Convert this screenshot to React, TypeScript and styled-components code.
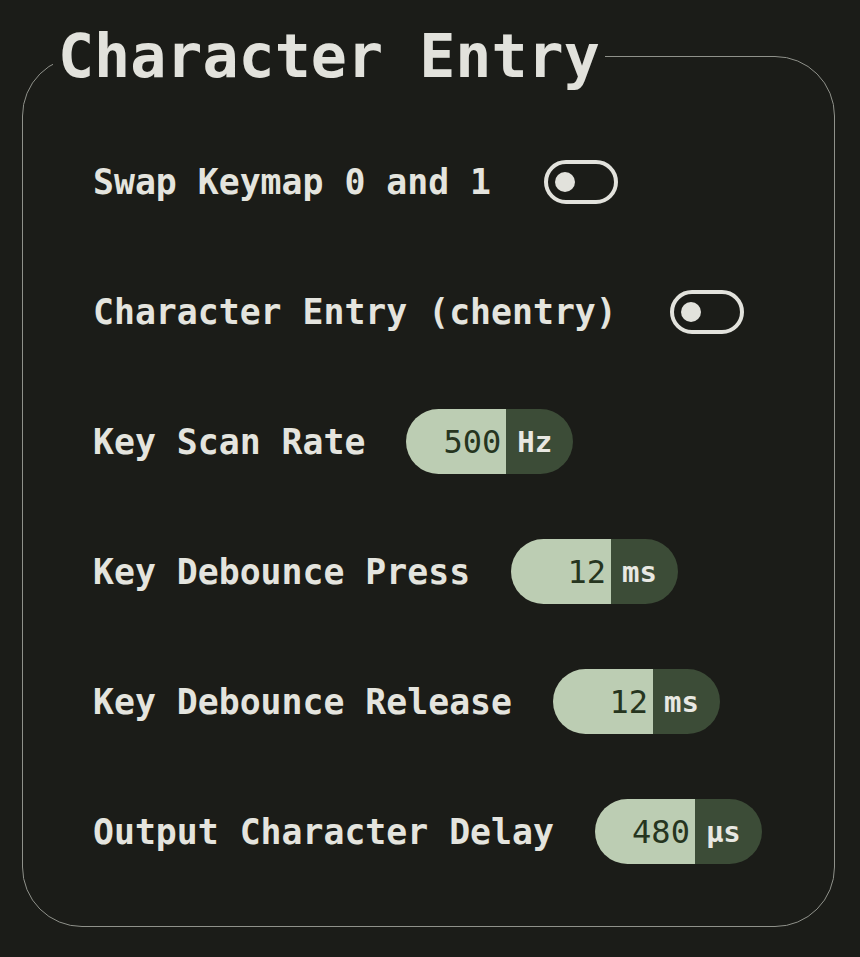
import React from "react";
import styled, { createGlobalStyle } from "styled-components";

const GlobalStyle = createGlobalStyle`
    html, body {
        margin: 0;
        padding: 0;
        background-color: #1b1c18;
    }
    body {
        font-family: "DejaVu Sans Mono", "Liberation Mono", monospace;
        color: #e4e4de;
    }
`

type Setting =
    | { kind: "toggle"; label: string; on: boolean }
    | { kind: "number"; label: string; value: number; unit: string }

const settings: Setting[] = [
    { kind: "toggle", label: "Swap Keymap 0 and 1", on: false },
    { kind: "toggle", label: "Character Entry (chentry)", on: false },
    { kind: "number", label: "Key Scan Rate", value: 500, unit: "Hz" },
    { kind: "number", label: "Key Debounce Press", value: 12, unit: "ms" },
    { kind: "number", label: "Key Debounce Release", value: 12, unit: "ms" },
    { kind: "number", label: "Output Character Delay", value: 480, unit: "μs" },
]

export default function App() {
    return (
        <>
            <GlobalStyle />
            <Page>
                <Panel>
                    <Title>Character Entry</Title>
                    {settings.map((s) => (
                        <Row key={s.label}>
                            <Label>{s.label}</Label>
                            {s.kind === "toggle" ? (
                                <Toggle role="switch" aria-checked={s.on}>
                                    <Knob on={s.on} />
                                </Toggle>
                            ) : (
                                <Pill>
                                    <Value readOnly value={s.value} />
                                    <Unit>{s.unit}</Unit>
                                </Pill>
                            )}
                        </Row>
                    ))}
                </Panel>
            </Page>
        </>
    )
}

const Page = styled.div`
    padding: 21px 25px 30px 22px;
`

const Panel = styled.fieldset`
    margin: 0;
    min-width: 0;
    border: 1.5px solid #8f918a;
    border-radius: 60px;
    padding: 58px 20px 62px 70px;
    display: flex;
    flex-direction: column;
    gap: 65px;
`

const Title = styled.legend`
    margin-left: -40px;
    padding: 0 5px;
    font-size: 60px;
    font-weight: bold;
    line-height: 70px;
    color: #e2e2dc;
`

const Row = styled.div`
    display: flex;
    align-items: center;
    height: 65px;
    gap: 41px;
`

const Label = styled.span`
    font-size: 34.8px;
    font-weight: bold;
    white-space: pre;
    color: #e4e4de;
`

const Toggle = styled.div`
    box-sizing: border-box;
    margin-left: 12px;
    width: 74px;
    height: 44px;
    border: 4px solid #e2e2dc;
    border-radius: 22px;
    display: flex;
    align-items: center;
    padding: 0 7px;
`

const Knob = styled.div<{ on: boolean }>`
    width: 20px;
    height: 20px;
    border-radius: 50%;
    background-color: #e2e2dc;
    margin-left: ${(props) => (props.on ? "auto" : "0")};
`

const Pill = styled.div`
    display: flex;
    width: 167px;
    height: 65px;
    border-radius: 33px;
    overflow: hidden;
`

const Value = styled.input`
    all: unset;
    box-sizing: border-box;
    width: 100px;
    height: 100%;
    padding-right: 5px;
    text-align: right;
    background-color: #bccdb3;
    color: #26351f;
    font-family: "DejaVu Sans Mono", monospace;
    font-size: 32px;
`

const Unit = styled.span`
    flex: 1;
    display: flex;
    align-items: center;
    padding-left: 11px;
    background-color: #3c4c37;
    color: #e8e8e2;
    font-size: 29px;
    font-weight: bold;
`
